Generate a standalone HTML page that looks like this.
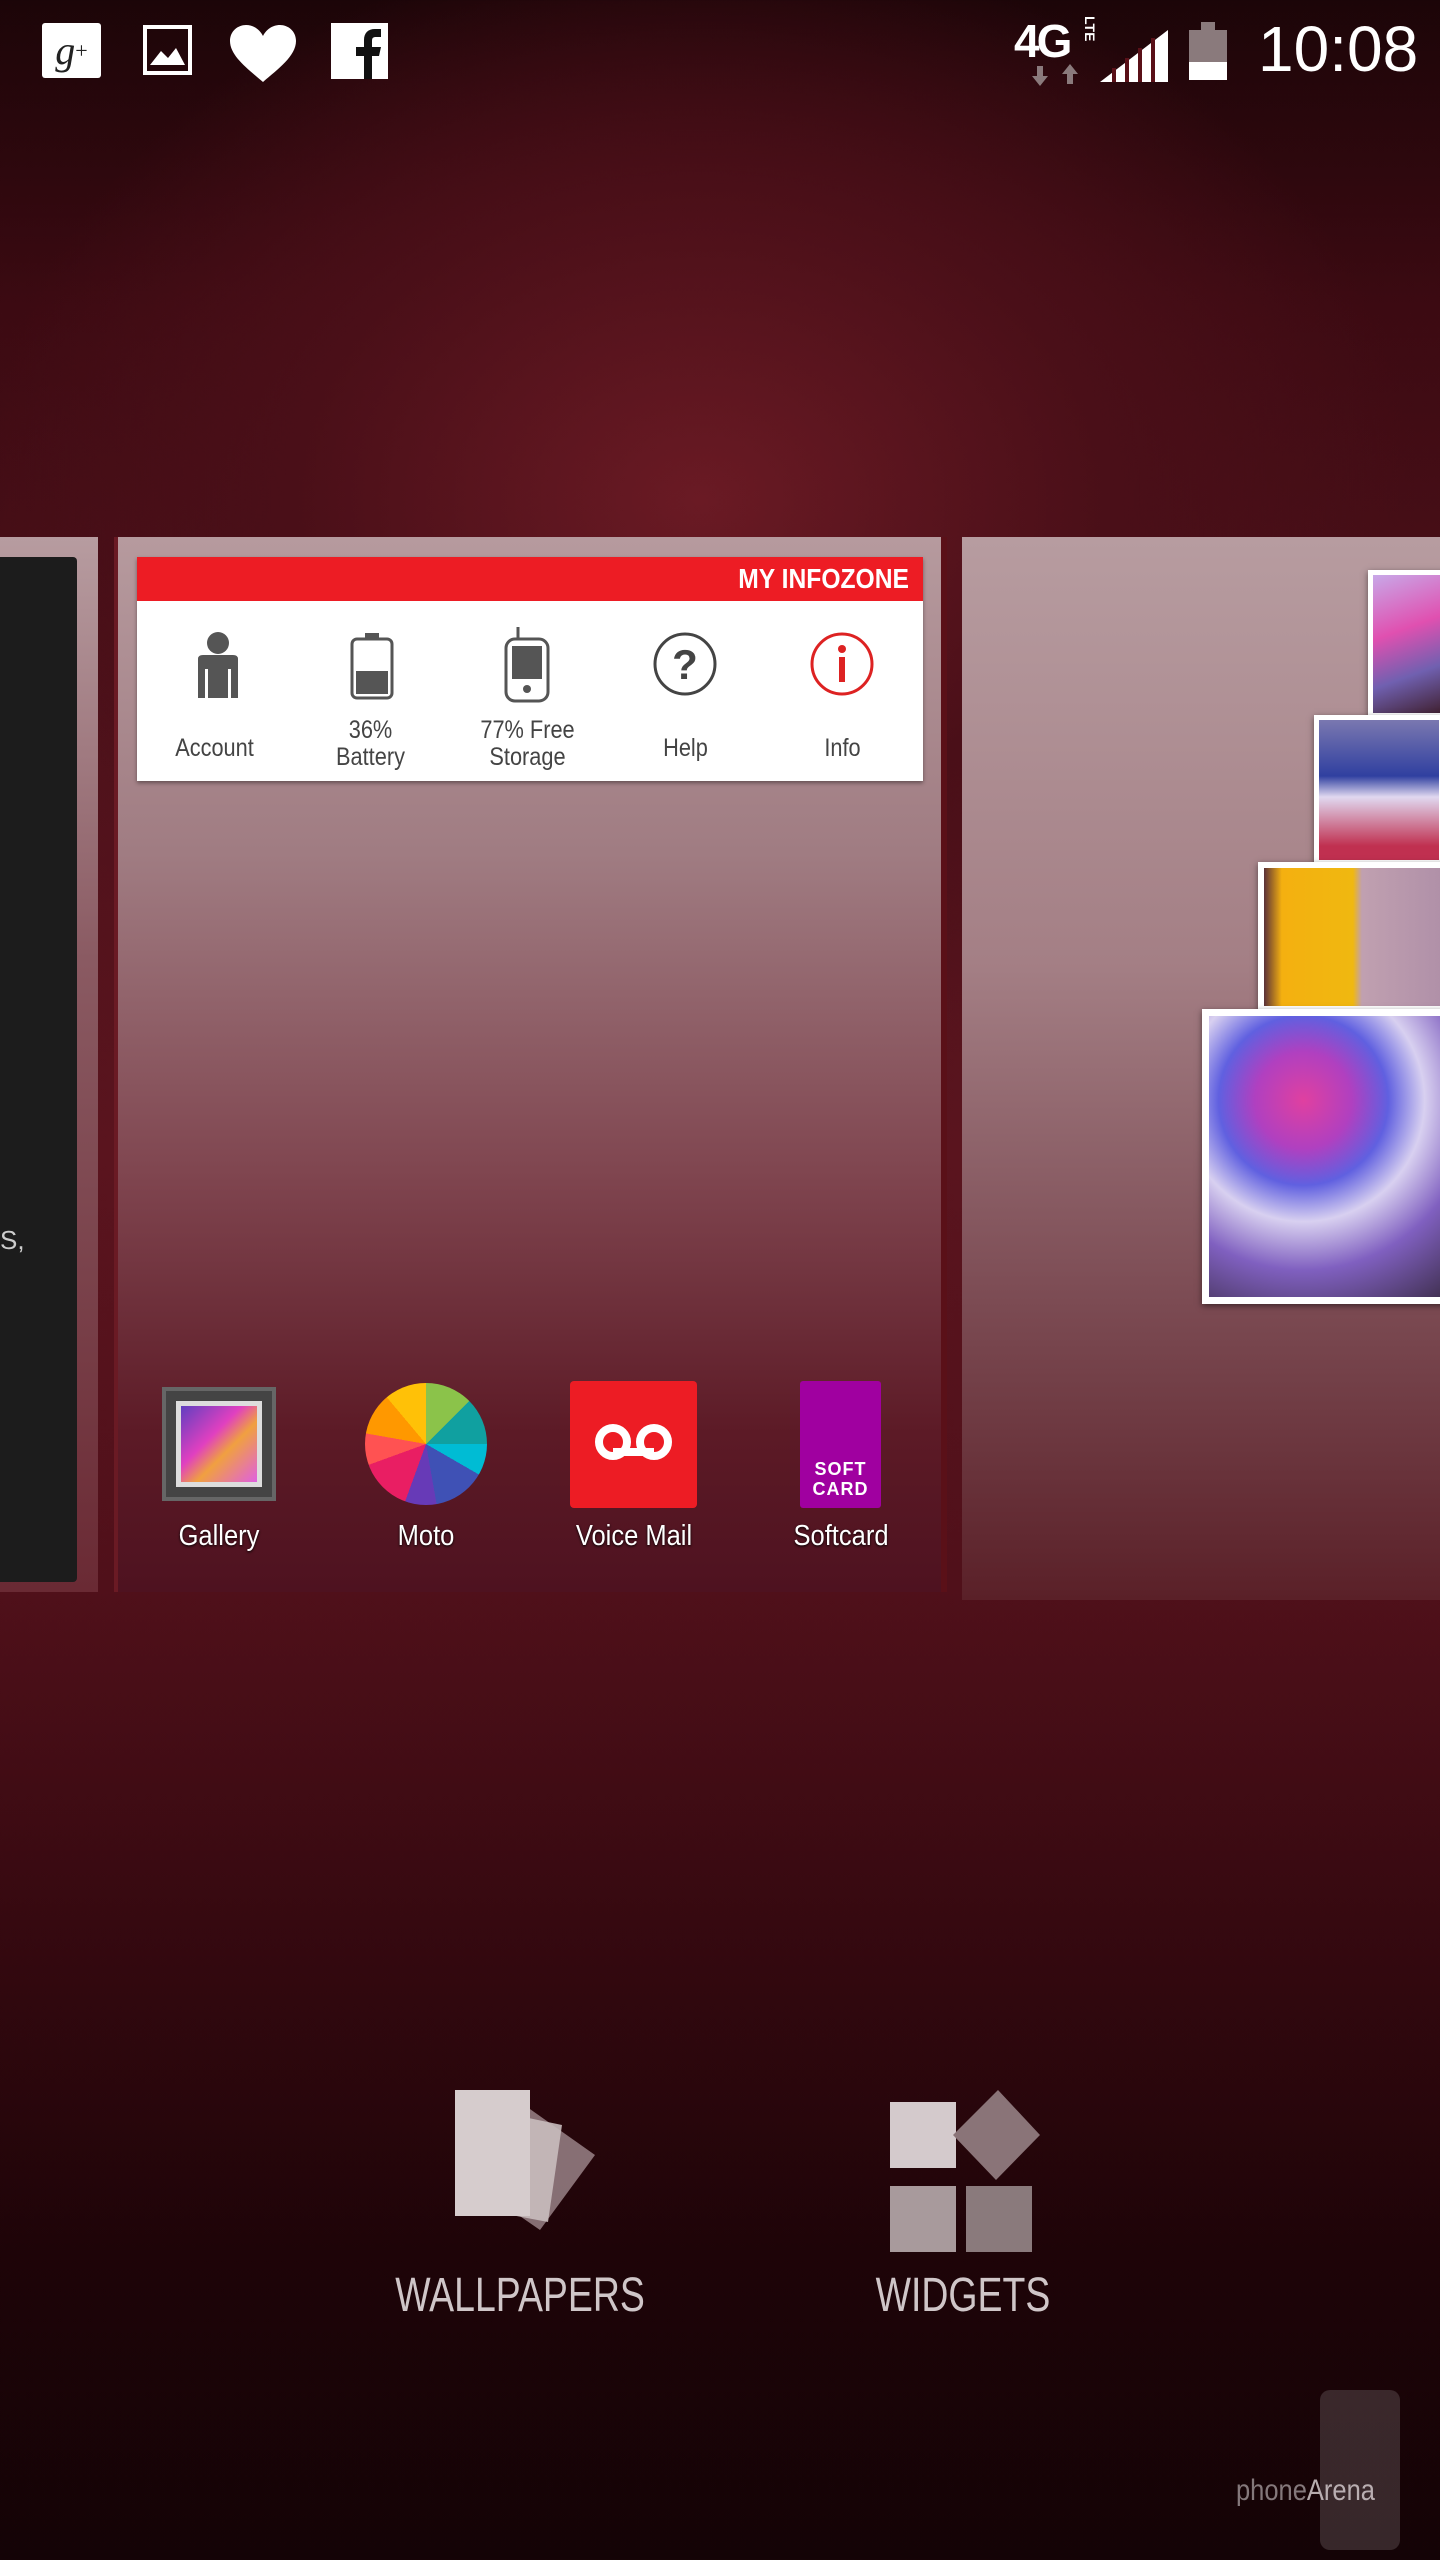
<!DOCTYPE html>
<html><head><meta charset="utf-8"><style>
*{margin:0;padding:0;box-sizing:border-box}
body{width:1440px;height:2560px;overflow:hidden;position:relative;font-family:"Liberation Sans",sans-serif;
background:radial-gradient(ellipse 900px 700px at 700px 500px,#6a1a24 0%,#4a0f18 45%,transparent 80%),linear-gradient(180deg,#1c0508 0%,#3c0a12 12%,#50121b 30%,#5a141e 45%,#50101a 62%,#360910 75%,#1e0408 88%,#140306 100%)}
.abs{position:absolute}
.panel{position:absolute;top:537px}
.lbl{position:absolute;color:#fff;font-size:29px;text-align:center;width:200px;text-shadow:0 1px 3px #000;transform:scaleX(.88)}
.zi{position:absolute;width:157px;text-align:center;color:#444;font-size:25px;line-height:27px;transform:scaleX(.87)}
</style></head><body>
<!-- status bar -->
<div class="abs" style="left:42px;top:23px;width:59px;height:55px;background:#fff;border-radius:3px;color:#222;font:italic 40px 'Liberation Serif',serif;text-align:center;line-height:55px">g<span style="font-size:22px;vertical-align:top;font-style:normal">+</span></div>
<div class="abs" style="left:143px;top:25px;width:49px;height:50px;border:4px solid #fff"><svg width="41" height="42" style="position:absolute;left:0;top:0"><path d="M3 36 L14 22 L21 29 L29 19 L38 36Z" fill="#fff"/></svg></div>
<svg class="abs" style="left:228px;top:24px" width="70" height="60"><path d="M35 58 C20 45 2 32 2 17 C2 7 10 1 18 1 C26 1 32 6 35 12 C38 6 44 1 52 1 C60 1 68 7 68 17 C68 32 50 45 35 58Z" fill="#fff"/></svg>
<div class="abs" style="left:331px;top:23px;width:57px;height:56px;background:#fff"><svg width="57" height="56"><path d="M33 56 V33 H25 V24 H33 V17 C33 10 37 6 44 6 H50 V14 H45 C42 14 41 15 41 18 V24 H50 L48 33 H41 V56Z" fill="#111"/></svg></div>
<div class="abs" style="left:1014px;top:14px;color:#fff;font:bold 46px 'Liberation Sans',sans-serif;letter-spacing:-3px">4G</div>
<div class="abs" style="left:1082px;top:16px;color:#fff;font:bold 14px 'Liberation Sans';writing-mode:vertical-rl">LTE</div>
<svg class="abs" style="left:1030px;top:64px" width="60" height="22"><path d="M10 22 L2 12 H7 V2 H13 V12 H18Z M40 0 L48 10 H43 V20 H37 V10 H32Z" fill="#8a7a7c"/></svg>
<svg class="abs" style="left:1100px;top:30px" width="72" height="52"><path d="M0 52 L68 0 V52Z" fill="#fff"/><path d="M14 52V38M27 52V28M40 52V18M53 52V8" stroke="#5a1018" stroke-width="4"/></svg>
<div class="abs" style="left:1189px;top:30px;width:38px;height:50px;background:#8a7a7c"><div style="position:absolute;left:0;bottom:0;width:38px;height:18px;background:#fff"></div></div>
<div class="abs" style="left:1201px;top:22px;width:14px;height:8px;background:#8a7a7c"></div>
<div class="abs" style="left:1258px;top:12px;color:#fff;font:64px 'Liberation Sans',sans-serif">10:08</div>

<!-- panels -->
<div class="panel" style="left:0;width:98px;height:1055px;background:linear-gradient(180deg,#b79ca0,#8a5a62 40%,#6a2a34)"></div>
<div class="abs" style="left:0;top:557px;width:77px;height:1025px;background:#1c1c1c;border-radius:0 4px 4px 0"></div>
<div class="abs" style="left:0;top:1225px;color:#ccc;font-size:26px">S,</div>
<div class="panel" style="left:114px;width:833px;height:1055px;background:linear-gradient(180deg,#b69a9e 0%,#a07c82 30%,#804650 60%,#5c1a26 85%,#4e1220 100%);border-left:4px solid #6a1a24;border-right:6px solid #5a1018"></div>
<div class="panel" style="left:962px;width:478px;height:1063px;background:linear-gradient(180deg,#b79ca0 0%,#a47f85 40%,#7e4e56 70%,#5a2028 100%)"></div>

<!-- infozone -->
<div class="abs" style="left:137px;top:557px;width:786px;height:224px;background:#fff;box-shadow:0 2px 4px rgba(0,0,0,.4)">
 <div style="height:44px;background:#ed1c24;"><div style="position:absolute;right:14px;top:6px;color:#fff;font:bold 28px 'Liberation Sans',sans-serif;transform:scaleX(.88);transform-origin:right">MY INFOZONE</div></div>
 <svg class="abs" style="left:56px;top:74px" width="50" height="70"><circle cx="25" cy="12" r="11" fill="#555"/><path d="M5 28 Q5 24 10 24 H40 Q45 24 45 28 V67 H38 V38 H35 V67 H15 V38 H12 V67 H5Z" fill="#555"/></svg>
 <svg class="abs" style="left:210px;top:74px" width="50" height="70"><rect x="18" y="2" width="14" height="6" fill="#555"/><rect x="5" y="8" width="40" height="59" rx="5" fill="none" stroke="#555" stroke-width="3"/><rect x="9" y="40" width="32" height="23" fill="#555"/></svg>
 <svg class="abs" style="left:365px;top:68px" width="50" height="80"><path d="M16 2V14" stroke="#555" stroke-width="3"/><rect x="4" y="14" width="42" height="62" rx="9" fill="none" stroke="#555" stroke-width="3"/><rect x="10" y="21" width="30" height="33" fill="#555"/><circle cx="25" cy="64" r="4" fill="#555"/></svg>
 <svg class="abs" style="left:515px;top:74px" width="66" height="66"><circle cx="33" cy="33" r="30" fill="none" stroke="#444" stroke-width="3"/><text x="33" y="48" text-anchor="middle" font-family="Liberation Sans" font-weight="bold" font-size="42" fill="#444">?</text></svg>
 <svg class="abs" style="left:672px;top:74px" width="66" height="66"><circle cx="33" cy="33" r="30" fill="none" stroke="#d22" stroke-width="3"/><circle cx="33" cy="18" r="4" fill="#d22"/><rect x="30" y="26" width="6" height="25" fill="#d22"/></svg>
 <div class="zi" style="left:-1px;top:178px">Account</div>
 <div class="zi" style="left:155px;top:160px">36%<br>Battery</div>
 <div class="zi" style="left:312px;top:160px">77% Free<br>Storage</div>
 <div class="zi" style="left:470px;top:178px">Help</div>
 <div class="zi" style="left:627px;top:178px">Info</div>
</div>

<!-- photo stack -->
<div class="abs" style="left:1368px;top:570px;width:80px;height:148px;background:#fff;padding:5px;box-shadow:0 2px 6px rgba(0,0,0,.5)"><div style="width:100%;height:100%;background:linear-gradient(160deg,#c8a8e8,#e050b0 40%,#7060b0 70%,#402030)"></div></div>
<div class="abs" style="left:1314px;top:715px;width:130px;height:150px;background:#fff;padding:5px;box-shadow:0 2px 6px rgba(0,0,0,.5)"><div style="width:100%;height:100%;background:linear-gradient(180deg,#7a78b0,#3040a0 40%,#e0d8f0 55%,#c03050 90%)"></div></div>
<div class="abs" style="left:1258px;top:862px;width:190px;height:150px;background:#fff;padding:6px;box-shadow:0 2px 6px rgba(0,0,0,.5)"><div style="width:100%;height:100%;background:linear-gradient(90deg,#5a3038 0%,#f4b010 10%,#f0b810 50%,#c0a0b0 55%,#b090a8 100%)"></div></div>
<div class="abs" style="left:1202px;top:1009px;width:250px;height:295px;background:#fff;padding:7px;box-shadow:0 2px 6px rgba(0,0,0,.5)"><div style="width:100%;height:100%;background:radial-gradient(circle at 40% 30%,#e040a0 0,#b040c0 20%,#6060e0 35%,#d8d0f0 50%,#8060c0 70%,#403050 100%)"></div></div>

<!-- apps -->
<div class="abs" style="left:162px;top:1387px;width:114px;height:114px;background:#444;border:4px solid #666;padding:10px"><div style="width:100%;height:100%;border:5px solid #ddd;background:linear-gradient(135deg,#6040c0,#e040c0 40%,#f0a040 60%,#e060e0)"></div></div>
<div class="abs" style="left:365px;top:1383px;width:122px;height:122px;border-radius:50%;background:conic-gradient(#8bc34a 0 45deg,#10a0a0 45deg 90deg,#00bcd4 90deg 120deg,#3f51b5 120deg 170deg,#673ab7 170deg 200deg,#e91e63 200deg 250deg,#ff5252 250deg 280deg,#ff9800 280deg 320deg,#ffc107 320deg 360deg)"></div>
<div class="abs" style="left:570px;top:1381px;width:127px;height:127px;background:#ed1c24;border-radius:4px"><svg width="127" height="127"><circle cx="43" cy="61" r="14" fill="none" stroke="#fff" stroke-width="8"/><circle cx="84" cy="61" r="14" fill="none" stroke="#fff" stroke-width="8"/><path d="M43 71H84" stroke="#fff" stroke-width="8"/></svg></div>
<div class="abs" style="left:800px;top:1381px;width:81px;height:127px;background:#a000a0;border-radius:3px;color:#fff;font:bold 18px 'Liberation Sans',sans-serif;text-align:center;padding-top:78px;line-height:20px;letter-spacing:1px">SOFT<br>CARD</div>
<div class="lbl" style="left:119px;top:1520px">Gallery</div>
<div class="lbl" style="left:326px;top:1520px">Moto</div>
<div class="lbl" style="left:534px;top:1520px">Voice Mail</div>
<div class="lbl" style="left:741px;top:1520px">Softcard</div>

<!-- bottom options -->
<svg class="abs" style="left:450px;top:2090px" width="150" height="170"><path d="M70 12 L145 65 L90 140 L15 88Z" fill="#a08a8e" opacity=".8"/><path d="M40 20 L112 35 L98 132 L24 118Z" fill="#c9bcbe" opacity=".9"/><rect x="5" y="0" width="75" height="126" fill="#d6cccd"/></svg>
<div class="abs" style="left:360px;top:2268px;width:320px;text-align:center;color:#cfc6c8;font-size:48px;transform:scaleX(.78)">WALLPAPERS</div>
<svg class="abs" style="left:888px;top:2090px" width="155" height="170"><rect x="2" y="12" width="66" height="66" fill="#d4cacc"/><path d="M110 0 L152 45 L108 90 L65 45Z" fill="#8a7478"/><rect x="2" y="96" width="66" height="66" fill="#a89a9c"/><rect x="78" y="96" width="66" height="66" fill="#8a7a7c"/></svg>
<div class="abs" style="left:800px;top:2268px;width:326px;text-align:center;color:#cfc6c8;font-size:48px;transform:scaleX(.78)">WIDGETS</div>

<!-- watermark -->
<div class="abs" style="left:1320px;top:2390px;width:80px;height:160px;border-radius:10px;background:rgba(120,110,112,.35)"></div>
<div class="abs" style="left:1236px;top:2474px;color:rgba(160,150,152,.8);font-size:30px;transform:scaleX(.85);transform-origin:left">phone<span style="color:rgba(200,190,192,.9)">Arena</span></div>
</body></html>
